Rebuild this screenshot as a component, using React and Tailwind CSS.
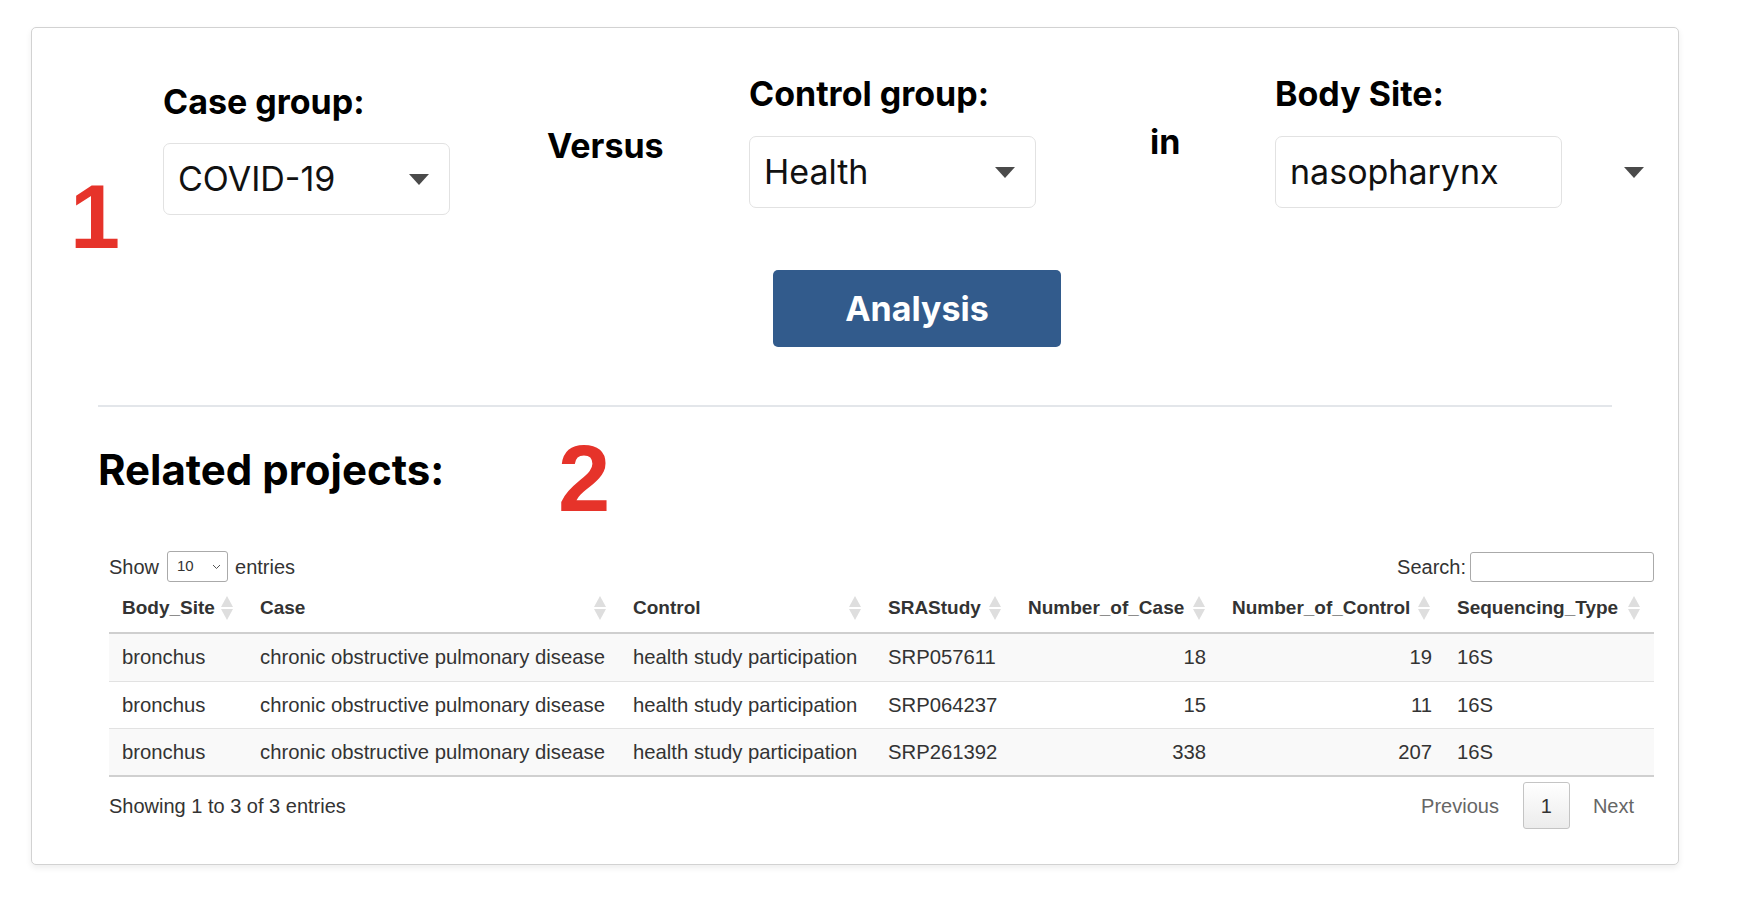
import React from 'react';

const rows = [
  { site: 'bronchus', disease: 'chronic obstructive pulmonary disease', control: 'health study participation', study: 'SRP057611', nCase: 18, nControl: 19, type: '16S' },
  { site: 'bronchus', disease: 'chronic obstructive pulmonary disease', control: 'health study participation', study: 'SRP064237', nCase: 15, nControl: 11, type: '16S' },
  { site: 'bronchus', disease: 'chronic obstructive pulmonary disease', control: 'health study participation', study: 'SRP261392', nCase: 338, nControl: 207, type: '16S' },
];

const headers = ['Body_Site', 'Case', 'Control', 'SRAStudy', 'Number_of_Case', 'Number_of_Control', 'Sequencing_Type'];

const gridCols = 'grid grid-cols-[138px_373px_255px_140px_204px_225px_210px]';

function Caret() {
  return (
    <svg width="20" height="11" viewBox="0 0 20 11" className="shrink-0">
      <path d="M0 0H20L10 11Z" fill="#4a4a4a" />
    </svg>
  );
}

function SortIcon() {
  return (
    <svg width="12" height="24" viewBox="0 0 12 24" className="shrink-0">
      <path d="M6 0L12 11H0Z" fill="#dedede" />
      <path d="M6 24L12 13H0Z" fill="#dedede" />
    </svg>
  );
}

function FakeSelect({ value, caret = true }) {
  return (
    <div className="flex h-[72px] w-[287px] items-center justify-between rounded-[7px] border border-[#e2e2e2] bg-white pl-[14px] pr-[20px]">
      <span className="text-[34px] font-normal leading-none text-[#111]">{value}</span>
      {caret && <Caret />}
    </div>
  );
}

function Label({ children }) {
  return <div className="text-[34px] font-bold leading-[40px] text-black">{children}</div>;
}

export default function App() {
  return (
    <div className="min-h-screen bg-white pl-[31px] pt-[27px]">
      <div className="h-[838px] w-[1648px] rounded-[5px] border border-[#d2d2d2] bg-white shadow-[0_3px_6px_rgba(0,0,0,0.07)]">
        {/* selection form */}
        <div className="flex h-[242px] items-start font-['Inter',sans-serif]">
          <div className="w-[131px] shrink-0 pl-[38px] pt-[144px]">
            <span className="block font-['Liberation_Sans',Arial,sans-serif] text-[90px] font-bold leading-[90px] text-[#e6332a]">1</span>
          </div>
          <div className="w-[288px] shrink-0 pt-[54px]">
            <Label>Case group:</Label>
            <div className="mt-[21px]">
              <FakeSelect value="COVID-19" />
            </div>
          </div>
          <div className="w-[298px] shrink-0 pl-[96px] pt-[98px]">
            <span className="text-[34px] font-bold leading-[40px] text-black">Versus</span>
          </div>
          <div className="w-[288px] shrink-0 pt-[46px]">
            <Label>Control group:</Label>
            <div className="mt-[22px]">
              <FakeSelect value="Health" />
            </div>
          </div>
          <div className="w-[238px] shrink-0 pl-[113px] pt-[94px]">
            <span className="text-[34px] font-bold leading-[40px] text-black">in</span>
          </div>
          <div className="w-[288px] shrink-0 pt-[46px]">
            <Label>Body Site:</Label>
            <div className="mt-[22px]">
              <FakeSelect value="nasopharynx" caret={false} />
            </div>
          </div>
          <div className="ml-[61px] pt-[139px]">
            <Caret />
          </div>
        </div>

        <button className="ml-[741px] flex h-[77px] w-[288px] items-center justify-center rounded-[5px] bg-[#325b8c] font-['Inter',sans-serif] text-[34px] font-bold text-white">
          Analysis
        </button>

        <div className="ml-[66px] mt-[58px] h-[2px] w-[1514px] bg-[#e3e6ea]" />

        <div className="ml-[66px] mt-[26px] flex items-start">
          <div className="w-[460px] shrink-0 pt-[13px]">
            <h2 className="font-['Inter',sans-serif] text-[42px] font-bold leading-[48px] text-black">Related projects:</h2>
          </div>
          <span className="font-['Liberation_Sans',Arial,sans-serif] text-[94px] font-bold leading-[92px] text-[#e6332a]">2</span>
        </div>

        {/* data table */}
        <div className="ml-[77px] mt-[26px] w-[1545px] font-['Liberation_Sans',Arial,sans-serif] text-[20px] text-[#333]">
          <div className="flex h-[31px] items-center justify-between">
            <div className="flex items-center">
              <span>Show</span>
              <div className="ml-[8px] flex h-[31px] w-[61px] items-center justify-between rounded-[3px] border border-[#aaa] pl-[9px] pr-[6px] text-[15px]">
                <span>10</span>
                <svg width="9" height="6" viewBox="0 0 9 6">
                  <path d="M1 1L4.5 4.5L8 1" fill="none" stroke="#555" strokeWidth="1" />
                </svg>
              </div>
              <span className="ml-[7px]">entries</span>
            </div>
            <div className="flex items-center">
              <span>Search:</span>
              <div className="ml-[4px] h-[30px] w-[184px] rounded-[3px] border border-[#aaa] bg-white" />
            </div>
          </div>

          <div className="mt-[2px] border-b-2 border-[#d0d0d0]">
            <div className={`${gridCols} h-[50px] items-center border-b-2 border-[#cfcfcf] text-[19px] font-bold`}>
              {headers.map((h) => (
                <div key={h} className="flex items-center justify-between pl-[13px] pr-[14px]">
                  <span>{h}</span>
                  <SortIcon />
                </div>
              ))}
            </div>
            {rows.map((r, i) => (
              <div
                key={r.study}
                className={`${gridCols} h-[47px] items-center text-[20.3px] ${i > 0 ? 'border-t border-[#e2e2e2]' : ''} ${i % 2 === 0 ? 'bg-[#f9f9f9]' : 'bg-white'}`}
              >
                <div className="pl-[13px]">{r.site}</div>
                <div className="pl-[13px]">{r.disease}</div>
                <div className="pl-[13px]">{r.control}</div>
                <div className="pl-[13px]">{r.study}</div>
                <div className="pr-[13px] text-right">{r.nCase}</div>
                <div className="pr-[12px] text-right">{r.nControl}</div>
                <div className="pl-[13px]">{r.type}</div>
              </div>
            ))}
          </div>

          <div className="mt-[5px] flex h-[47px] items-center justify-between">
            <span>Showing 1 to 3 of 3 entries</span>
            <div className="mr-[20px] flex items-center">
              <span className="text-[#666]">Previous</span>
              <span className="ml-[24px] flex h-[47px] w-[47px] items-center justify-center rounded-[3px] border border-[#c4c4c4] bg-gradient-to-b from-white to-[#ececec]">1</span>
              <span className="ml-[23px] text-[#666]">Next</span>
            </div>
          </div>
        </div>
      </div>
    </div>
  );
}
